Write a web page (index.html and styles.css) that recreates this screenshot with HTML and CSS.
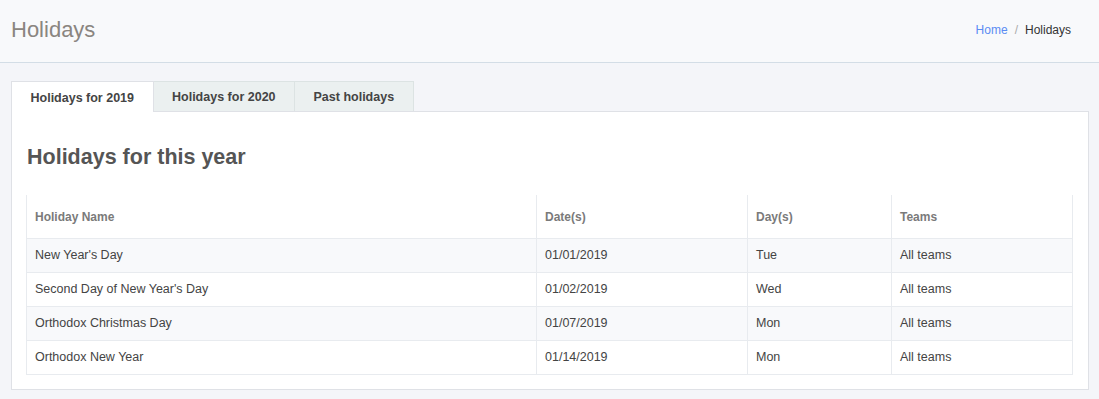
FILE: index.html
```html
<!DOCTYPE html>
<html lang="en">
<head>
    <meta charset="UTF-8">
    <title>Holidays</title>
    <link rel="stylesheet" href="styles.css">
</head>
<body>
    <header class="page-header">
        <h1>Holidays</h1>
        <div class="breadcrumb">
            <a href="#">Home</a>
            <span class="sep">/</span>
            <span>Holidays</span>
        </div>
    </header>

    <div class="content">
        <ul class="tabs">
            <li class="tab active">Holidays for 2019</li>
            <li class="tab">Holidays for 2020</li>
            <li class="tab">Past holidays</li>
        </ul>

        <div class="panel">
            <h2>Holidays for this year</h2>
            <table class="holiday-table">
                <thead>
                    <tr>
                        <th class="col-name">Holiday Name</th>
                        <th class="col-date">Date(s)</th>
                        <th class="col-day">Day(s)</th>
                        <th>Teams</th>
                    </tr>
                </thead>
                <tbody>
                    <tr>
                        <td>New Year's Day</td>
                        <td>01/01/2019</td>
                        <td>Tue</td>
                        <td>All teams</td>
                    </tr>
                    <tr>
                        <td>Second Day of New Year's Day</td>
                        <td>01/02/2019</td>
                        <td>Wed</td>
                        <td>All teams</td>
                    </tr>
                    <tr>
                        <td>Orthodox Christmas Day</td>
                        <td>01/07/2019</td>
                        <td>Mon</td>
                        <td>All teams</td>
                    </tr>
                    <tr>
                        <td>Orthodox New Year</td>
                        <td>01/14/2019</td>
                        <td>Mon</td>
                        <td>All teams</td>
                    </tr>
                </tbody>
            </table>
        </div>
    </div>
</body>
</html>
```

FILE: styles.css
```css
/* Basic Reset */
* {
    margin: 0;
    padding: 0;
    box-sizing: border-box;
}

body {
    background: #f4f5f9;
    color: #444;
    font-family: "Liberation Sans", Arial, sans-serif;
}

/* Header */
.page-header {
    height: 63px;
    background: #f8f9fb;
    border-bottom: 1px solid #d3dde6;
    display: flex;
    justify-content: space-between;
    align-items: center;
    padding: 0 28px 2px 11px;
}

.page-header h1 {
    font-size: 22px;
    font-weight: normal;
    color: #8a8580;
}

.breadcrumb {
    font-size: 12px;
    color: #333;
    display: flex;
    align-items: center;
}

.breadcrumb a {
    color: #5b8cf3;
    text-decoration: none;
}

.breadcrumb .sep {
    color: #aaa;
    margin: 0 7px;
}

/* Tabs */
.content {
    padding: 18px 10px 10px 11px;
}

.tabs {
    list-style: none;
    display: flex;
    height: 30px;
    position: relative;
    z-index: 1;
}

.tab {
    font-size: 12.5px;
    font-weight: bold;
    color: #444;
    background: #ebf0f0;
    border: 1px solid #dce3e3;
    border-bottom: none;
    display: flex;
    align-items: center;
    padding: 1px 18.5px 0 18.5px;
    height: 30px;
}

.tab + .tab {
    border-left: none;
}

.tab.active {
    background: #fff;
    border-color: #dfe1e6;
    height: 31px;
}

/* Panel */
.panel {
    background: #fff;
    border: 1px solid #dfe1e6;
    padding: 0 15px 14px 14px;
}

.panel h2 {
    font-size: 21.5px;
    font-weight: bold;
    color: #555;
    line-height: 24px;
    margin: 33px 0 26px 1px;
}

/* Table */
.holiday-table {
    width: 100%;
    border-collapse: collapse;
    font-size: 12.5px;
}

.holiday-table th,
.holiday-table td {
    text-align: left;
    border: 1px solid #e8ebef;
    padding: 0 8px;
}

.holiday-table th {
    border-top: none;
    height: 43px;
    font-size: 12px;
    color: #7a7a7a;
    padding-top: 1px;
}

.holiday-table td {
    height: 34px;
    color: #444;
}

.holiday-table tbody tr:nth-child(odd) {
    background: #f8f9fb;
}

.col-name {
    width: 510px;
}

.col-date {
    width: 211px;
}

.col-day {
    width: 144px;
}
```
